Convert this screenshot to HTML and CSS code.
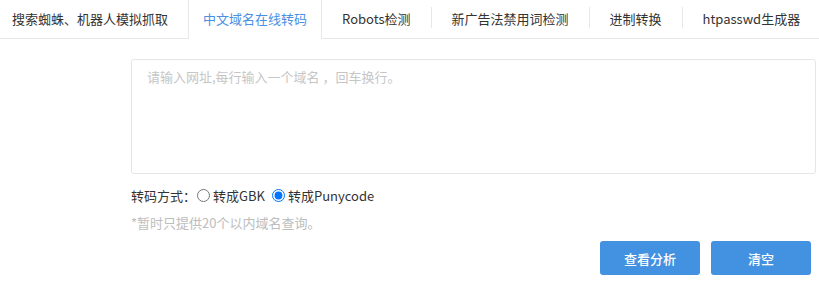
FILE: index.html
```html
<!DOCTYPE html>
<html lang="zh-CN">
<head>
  <meta charset="UTF-8" />
  <title>中文域名在线转码</title>
  <link rel="stylesheet" href="styles.css">
</head>
<body>

  <ul class="tabs">
    <li class="tab first">搜索蜘蛛、机器人模拟抓取</li>
    <li class="tab active">中文域名在线转码</li>
    <li class="tab">Robots检测</li>
    <li class="tab sep">新广告法禁用词检测</li>
    <li class="tab sep">进制转换</li>
    <li class="tab sep">htpasswd生成器</li>
  </ul>

  <div class="panel">
    <textarea class="domains" placeholder="请输入网址,每行输入一个域名 ，回车换行。"></textarea>

    <div class="options">
      <span class="label">转码方式：</span>
      <label><input type="radio" name="mode"> 转成GBK</label>
      <label><input type="radio" name="mode" checked> 转成Punycode</label>
    </div>

    <p class="note">*暂时只提供20个以内域名查询。</p>

    <div class="actions">
      <button class="btn">查看分析</button>
      <button class="btn">清空</button>
    </div>
  </div>

</body>
</html>
```

FILE: styles.css
```css
body {
  font-family: "Noto Sans CJK SC", "Liberation Sans", sans-serif;
  font-size: 13px;
  color: #333;
  margin: 0;
  padding: 0;
  background: #fff;
}

.tabs {
  list-style: none;
  margin: 0;
  padding: 0;
  display: flex;
  height: 38px;
  border-bottom: 1px solid #e8e8e8;
}

.tab {
  position: relative;
  padding: 0 20px;
  line-height: 37px;
  white-space: nowrap;
  color: #333;
}

.tab.first {
  padding-left: 12px;
}

.tab.active {
  padding: 0 14px;
  color: #4a90e2;
  background: #fff;
  border-left: 1px solid #e8e8e8;
  border-right: 1px solid #e8e8e8;
  height: 39px;
}

.tab.sep {
  border-left: 1px solid transparent;
}

.tab.sep::before {
  content: "";
  position: absolute;
  left: -1px;
  top: 7px;
  height: 21px;
  border-left: 1px solid #e8e8e8;
}

.panel {
  margin: 20px 3px 0 131px;
}

.domains {
  display: block;
  box-sizing: border-box;
  width: 100%;
  height: 115px;
  padding: 7px 15px;
  border: 1px solid #e6e6e6;
  border-radius: 3px;
  resize: none;
  font-family: inherit;
  font-size: 13px;
  color: #333;
  outline: none;
}

.domains::placeholder {
  color: #c6c6c6;
}

.options {
  display: flex;
  align-items: center;
  margin-top: 10px;
  height: 22px;
}

.options .label {
  margin-right: 1px;
}

.options label {
  display: flex;
  align-items: center;
  margin-right: 7px;
}

.options input {
  width: 13px;
  height: 13px;
  margin: 0 3px 0 0;
}

.note {
  margin: 8px 0 0;
  color: #bdbdbd;
  line-height: 18px;
}

.actions {
  display: flex;
  justify-content: flex-end;
  gap: 11px;
  margin: 9px 5px 0 0;
}

.btn {
  width: 100px;
  height: 34px;
  border: none;
  border-radius: 3px;
  background: #4391e1;
  color: white;
  font-family: inherit;
  font-size: 13px;
  font-weight: 500;
  cursor: pointer;
}
```
